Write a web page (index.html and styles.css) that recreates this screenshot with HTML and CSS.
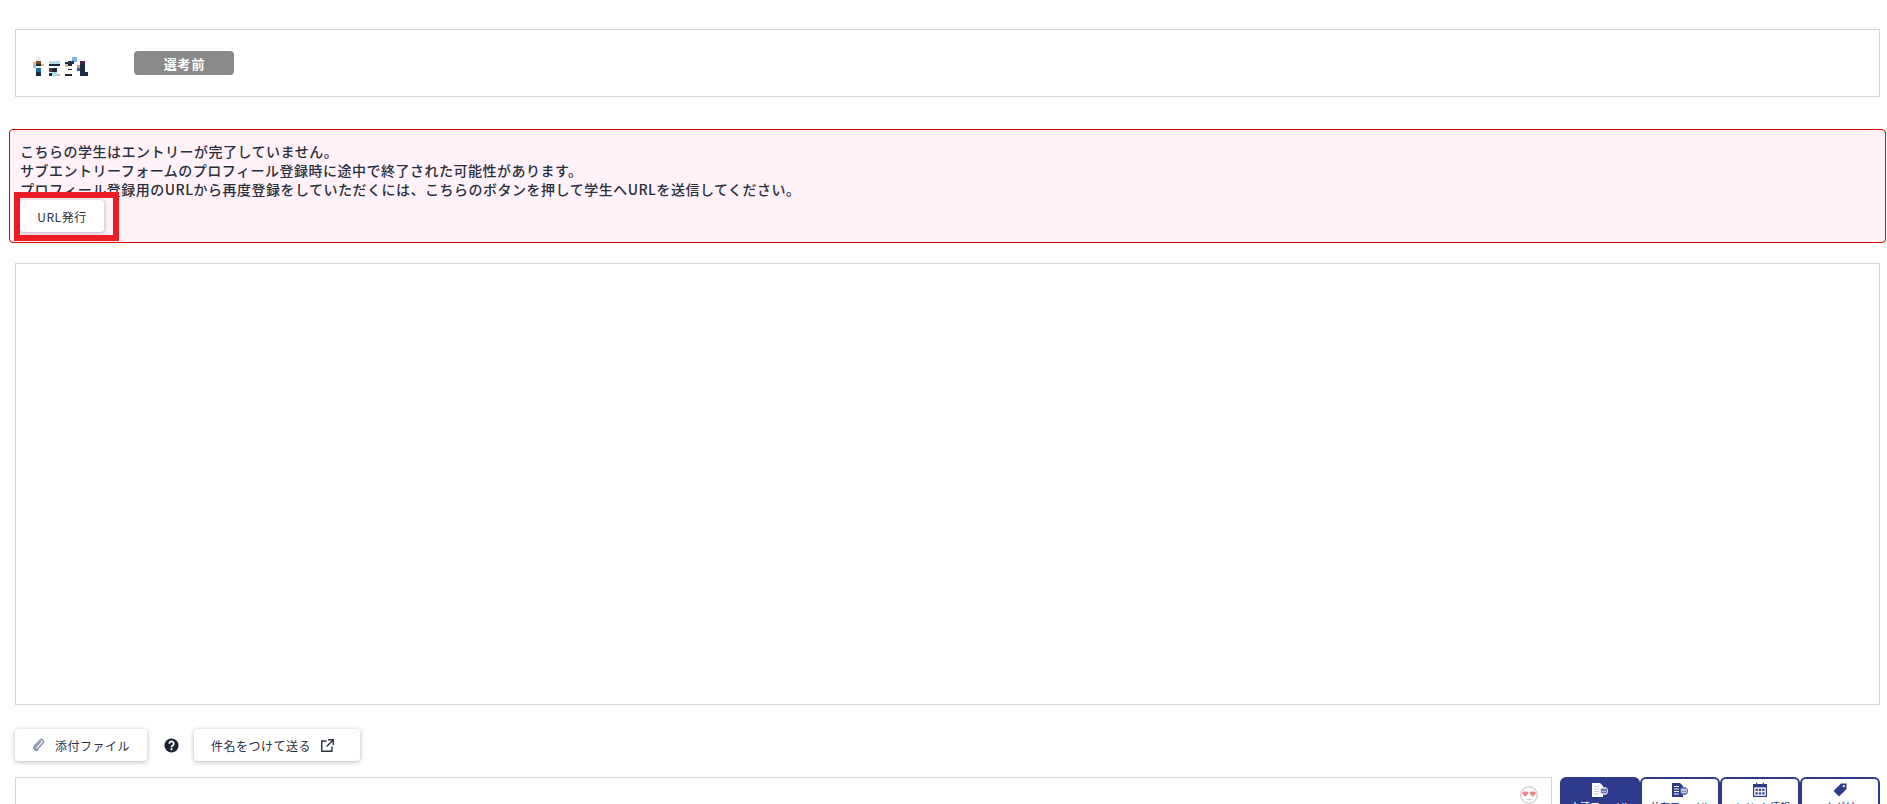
FILE: index.html
```html
<!DOCTYPE html>
<html lang="ja">
<head>
<meta charset="utf-8">
<title>学生詳細</title>
<link rel="stylesheet" href="styles.css">
</head>
<body>
<main class="page">
  <section class="head-box">
    <svg class="mosaic" viewBox="99 110 165 57" width="55" height="19" shape-rendering="crispEdges" aria-label="氏名">
      <rect x="108" y="110" width="14" height="12" fill="#eceef2"/>
      <rect x="108" y="122" width="14" height="8" fill="#7b4a31"/>
      <rect x="99" y="125" width="9" height="10" fill="#dcb98e"/>
      <rect x="122" y="130" width="10" height="8" fill="#dcb98e"/>
      <rect x="108" y="130" width="14" height="7" fill="#1c2a40"/>
      <rect x="99" y="135" width="9" height="7" fill="#8fbde6"/>
      <rect x="108" y="142" width="14" height="13" fill="#1f66a8"/>
      <rect x="108" y="155" width="14" height="12" fill="#1c2a40"/>
      <rect x="147" y="122" width="33" height="8" fill="#b4dde8"/>
      <rect x="147" y="130" width="33" height="6" fill="#1c2a40"/>
      <rect x="147" y="143" width="10" height="12" fill="#6a4030"/>
      <rect x="157" y="143" width="13" height="12" fill="#1c2a40"/>
      <rect x="147" y="158" width="10" height="9" fill="#1c2a40"/>
      <rect x="157" y="155" width="13" height="12" fill="#a4dde2"/>
      <rect x="170" y="160" width="10" height="7" fill="#d9b98e"/>
      <rect x="217" y="110" width="15" height="15" fill="#80b6ef"/>
      <rect x="205" y="122" width="17" height="10" fill="#22365a"/>
      <rect x="195" y="125" width="10" height="7" fill="#1c2a40"/>
      <rect x="195" y="132" width="10" height="8" fill="#dcb98e"/>
      <rect x="205" y="132" width="12" height="5" fill="#1c2a40"/>
      <rect x="205" y="145" width="12" height="5" fill="#1c2a40"/>
      <rect x="195" y="160" width="22" height="7" fill="#1c2a40"/>
      <rect x="240" y="122" width="15" height="10" fill="#40294a"/>
      <rect x="240" y="132" width="15" height="35" fill="#1c2a40"/>
      <rect x="232" y="135" width="8" height="7" fill="#d0a080"/>
      <rect x="232" y="142" width="8" height="10" fill="#2e5fa4"/>
      <rect x="240" y="155" width="24" height="12" fill="#1c2f50"/>
    </svg>
    <span class="badge">選考前</span>
  </section>

  <section class="alert">
    <p>こちらの学生はエントリーが完了していません。</p>
    <p>サブエントリーフォームのプロフィール登録時に途中で終了された可能性があります。</p>
    <p>プロフィール登録用のURLから再度登録をしていただくには、こちらのボタンを押して学生へURLを送信してください。</p>
    <button class="btn btn-url" type="button">URL発行</button>
    <span class="marker"></span>
  </section>

  <section class="message-box"></section>

  <div class="actions">
    <button class="btn btn-attach" type="button">
      <svg class="clip" viewBox="0 0 14 14" width="14" height="14"><path d="M10.800 2.200a2 2 0 0 1 .2 2.800L5.600 10.800a1.300 1.300 0 0 1-1.900-1.800L8.800 3.600M10.800 2.200A2 2 0 0 0 8 2.200L2.400 8a3 3 0 0 0 .1 3.600 2.700 2.700 0 0 0 3.500-.1" fill="none" stroke="#8390a6" stroke-width="1.300" stroke-linecap="round"/></svg>
      添付ファイル
    </button>
    <svg class="help" viewBox="0 0 16 16" width="15" height="15"><circle cx="8" cy="8" r="7.500" fill="#1c2233"/><path d="M5.600 6.100a2.400 2.400 0 1 1 3.700 2c-.8.500-1.300.900-1.300 1.700" fill="none" stroke="#fff" stroke-width="1.900"/><rect x="7" y="10.900" width="2" height="2" fill="#fff"/></svg>
    <button class="btn btn-subject" type="button">
      件名をつけて送る
      <svg class="ext" viewBox="0 0 14 14" width="13" height="13"><path d="M6 2.200H.8v11h11V8M7.600.8h5.600v5.600M13 1 6 8" fill="none" stroke="#2a3040" stroke-width="1.500"/></svg>
    </button>
  </div>

  <div class="composer-row">
    <section class="composer">
      <svg class="emoji" viewBox="0 0 18 18" width="18" height="18"><circle cx="9" cy="9" r="8.300" fill="#fff" stroke="#bdbdbd" stroke-width="1"/><path d="M5.300 10.800 2.700 8a1.600 1.600 0 0 1 2.600-1.900A1.600 1.600 0 0 1 7.900 8zM12.700 10.800 10.100 8a1.600 1.600 0 0 1 2.600-1.900A1.600 1.600 0 0 1 15.300 8z" fill="#f08484"/><path d="M6.500 13.200c1.500.8 3.500.8 5 0" fill="none" stroke="#bdbdbd"/></svg>
    </section>
    <nav class="tabs">
      <a class="tab active">
        <svg viewBox="0 0 16 14" width="16" height="14"><path d="M0 0h8l3 3v11H0z" fill="#fff"/><path d="M2 3.500h5M2 6h5M2 8.500h5M2 11h5" stroke="#c3cae6"/><circle cx="12" cy="8" r="4" fill="#d7dbef"/><path d="M9.800 6.300h4.400v3.400H9.800zM9.800 6.300 12 8.200l2.200-1.900" fill="none" stroke="#2e3b8c" stroke-width=".8"/></svg>
        <span>未読ファイル</span>
      </a>
      <a class="tab">
        <svg viewBox="0 0 16 14" width="16" height="14"><path d="M0 0h8l3 3v11H0z" fill="#2e3b8c"/><path d="M2 3.500h5M2 6h5M2 8.500h5M2 11h5" stroke="#fff"/><circle cx="12" cy="8" r="4" fill="#5a6bb4"/><path d="M9.800 6.300h4.400v3.400H9.800zM9.800 6.300 12 8.200l2.200-1.900" fill="none" stroke="#fff" stroke-width=".8"/></svg>
        <span>共有ファイル</span>
      </a>
      <a class="tab">
        <svg viewBox="0 0 14 14" width="14" height="14"><rect x=".6" y="1.600" width="12.800" height="11.800" fill="#fff" stroke="#2e3b8c" stroke-width="1.200"/><rect x=".6" y="1.600" width="12.800" height="2.800" fill="#2e3b8c"/><rect x="3" y="0" width="1.300" height="3" fill="#2e3b8c"/><rect x="9.700" y="0" width="1.300" height="3" fill="#2e3b8c"/><path d="M2.500 5.800h2.200v2.200H2.500zM5.900 5.800h2.200v2.200H5.900zM9.300 5.800h2.200v2.200H9.300zM2.500 9.200h2.200v2.200H2.500zM5.900 9.200h2.200v2.200H5.900zM9.300 9.200h2.200v2.200H9.300z" fill="#2e3b8c"/></svg>
        <span>イベント情報</span>
      </a>
      <a class="tab">
        <svg viewBox="0 0 14 14" width="14" height="14"><path d="M8 .5h5.500V6L6 13.500.5 8z" fill="#2e3b8c"/><circle cx="10.800" cy="3.200" r="1.100" fill="#fff"/></svg>
        <span>タグ付</span>
      </a>
    </nav>
  </div>
</main>
</body>
</html>
```
FILE: styles.css
```css
* { box-sizing: border-box; }
html, body { margin: 0; height: 100%; overflow: hidden; background: #fff; }
body { font-family: "Noto Sans CJK JP", "Noto Sans", sans-serif; color: #2a3040; }
.page { height: 804px; padding: 29px 0 0; }

.head-box {
  display: flex; align-items: center; height: 68px;
  margin: 0 7px 0 15px; padding: 0 0 0 17px;
  border: 1px solid #d4d4dc;
}
.mosaic { display: block; margin-top: 7px; flex: none; }
.badge {
  display: flex; align-items: center; justify-content: center;
  width: 100px; height: 24px; margin-left: 46px;
  border-radius: 4px; background: #8a8a8a; color: #fff;
  font-size: 13px; font-weight: 700; letter-spacing: .9px;
  padding-left: 1px;
}

.alert {
  position: relative; height: 114px;
  margin: 32px 1px 0 9px; padding: 12px 10px 0;
  border: 1px solid #e00000; border-radius: 4px; background: #fff2f8;
  color: #2a2e3c;
  font-size: 14px; font-weight: 500; line-height: 19px;
}
.alert p { margin: 0; letter-spacing: .5px; }

.btn {
  display: inline-flex; align-items: center; justify-content: center;
  border: 0; border-radius: 4px; background: #fff; color: #2a3040;
  font-family: inherit; font-size: 12px; font-weight: 400; letter-spacing: .5px;
  box-shadow: 0 1px 5px rgba(30, 30, 50, .32);
}
.btn-url { position: absolute; left: 10px; top: 70px; width: 84px; height: 32px; }
.marker {
  position: absolute; left: 4px; top: 62px; width: 105px; height: 49px;
  border: 6px solid #ed1c24;
}

.message-box { height: 442px; margin: 20px 7px 0 15px; border: 1px solid #d4d4dc; }

.actions { display: flex; align-items: center; height: 32px; margin: 24px 0 0 15px; }
.btn-attach { width: 132px; height: 32px; gap: 9px; }
.btn-subject { width: 166px; height: 32px; gap: 10px; padding: 0 9px 0 0; }
.help { margin: 0 15px 0 17px; flex: none; }

.composer-row { display: flex; margin: 16px 7px 0 15px; gap: 8px; }
.composer {
  position: relative; flex: 1; height: 60px;
  border: 1px solid #d4d4dc;
}
.emoji { position: absolute; right: 13px; top: 8px; }
.tabs { display: flex; }
.tab {
  display: flex; flex-direction: column; align-items: center;
  width: 80px; height: 60px; padding-top: 4px;
  border: 2px solid #2e3b8c; border-radius: 6px 6px 0 0;
  background: #fff; color: #2e3b8c;
  font-size: 10px; font-weight: 500; line-height: 14px;
}
.tab span { margin-top: 3px; white-space: nowrap; }
.tab.active { background: #2e3b8c; color: #fff; }
```
